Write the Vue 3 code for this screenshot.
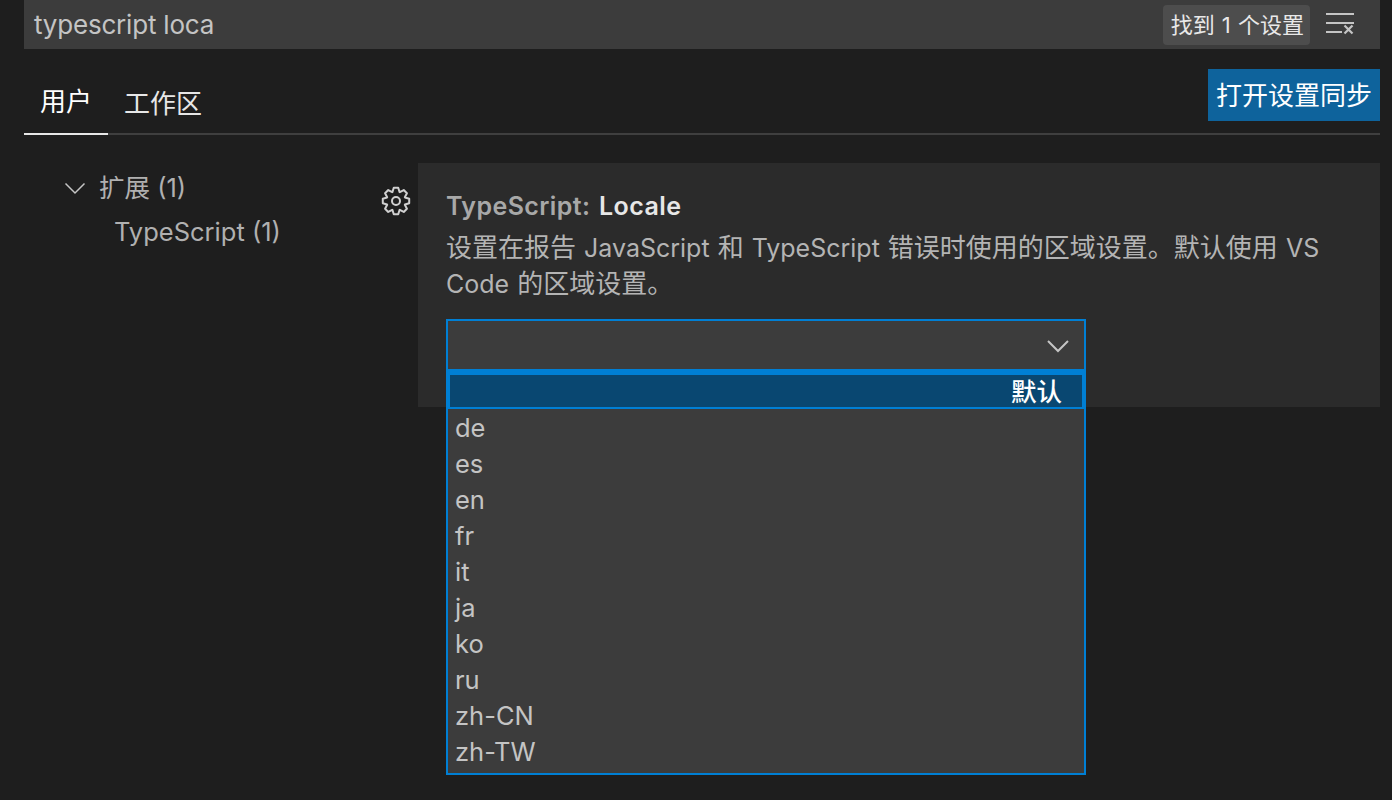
<template>
  <div class="page">
    <div class="search">
      <span class="query">typescript loca</span>
      <span class="count">找到 1 个设置</span>
      <svg class="clear" width="30" height="24" viewBox="0 0 30 24" fill="none" stroke="#c5c5c5" stroke-width="2">
        <path d="M2 2h28M2 11h28M2 20h16" />
        <path d="M20.500 13.500l8 8M28.500 13.500l-8 8" stroke-width="2.200" />
      </svg>
    </div>

    <div class="tabs">
      <div class="tab active">用户</div>
      <div class="tab">工作区</div>
      <button class="sync">打开设置同步</button>
    </div>

    <div class="body">
      <div class="toc">
        <div class="toc-row group">
          <svg width="22" height="14" viewBox="0 0 22 14" fill="none" stroke="#c5c5c5" stroke-width="1.500">
            <path d="M1.500 2.500l9.500 9.500 9.500-9.500" />
          </svg>
          <span class="toc-label">扩展 (1)</span>
        </div>
        <div class="toc-row child">TypeScript (1)</div>
      </div>

      <div class="gear-col">
        <svg width="30" height="30" viewBox="0 0 30 30" fill="none" stroke="#d0d0d0" stroke-width="2" stroke-linejoin="round">
          <path :d="gearPath" />
          <circle cx="15" cy="15" r="4" />
        </svg>
      </div>

      <div class="card">
        <div class="title"><span>TypeScript:</span> <b>Locale</b></div>
        <div class="desc">
          <div v-for="(line, i) in descLines" :key="i" class="desc-line">
            <template v-for="(run, j) in line" :key="j">
              <span :class="{ en: run.en }">{{ run.text }}</span>{{ j < line.length - 1 ? " " : "" }}
            </template>
          </div>
        </div>
        <div class="select">
          <div class="select-box">
            <svg width="24" height="14" viewBox="0 0 24 14" fill="none" stroke="#c5c5c5" stroke-width="2">
              <path d="M2 2l10 10 10-10" />
            </svg>
          </div>
          <div class="menu">
            <div class="option current">默认</div>
            <div class="list">
              <div v-for="item in locales" :key="item" class="option">{{ item }}</div>
            </div>
          </div>
        </div>
      </div>
    </div>
  </div>
</template>

<script setup>
const locales = ["de", "es", "en", "fr", "it", "ja", "ko", "ru", "zh-CN", "zh-TW"];

// latin runs sit a touch smaller than the CJK around them
const descLines = [
  [
    { text: "设置在报告" },
    { text: "JavaScript", en: true },
    { text: "和" },
    { text: "TypeScript", en: true },
    { text: "错误时使用的区域设置。默认使用" },
    { text: "VS", en: true },
  ],
  [{ text: "Code", en: true }, { text: "的区域设置。" }],
];

// 8 tooth gear outline, centred in a 30 box
const buildGear = () => {
  const points = [];
  for (let i = 0; i < 8; i++) {
    const a = (i * Math.PI) / 4 - Math.PI / 2;
    const step = 0.21;
    [
      [9.6, -step * 1.8],
      [13.4, -step * 0.8],
      [13.4, step * 0.8],
      [9.6, step * 1.8],
    ].forEach(([r, d]) => {
      points.push(`${(15 + r * Math.cos(a + d)).toFixed(2)} ${(15 + r * Math.sin(a + d)).toFixed(2)}`);
    });
  }
  return "M" + points.join("L") + "Z";
};

const gearPath = buildGear();
</script>

<style>
html,
body {
  background: #1e1e1e;
}
</style>

<style scoped>
.page {
  box-sizing: border-box;
  width: 1392px;
  height: 800px;
  padding: 0 12px 0 24px;
  background: #1e1e1e;
  color: #ccc;
  font-family: "Inter", "Noto Sans CJK SC", sans-serif;
  overflow: hidden;
}

.search {
  display: flex;
  align-items: center;
  height: 49px;
  padding: 0 26px 0 10px;
  background: #3c3c3c;
}

.query {
  flex: 1;
  font-size: 26px;
  letter-spacing: -0.2px;
  color: #c4c4c4;
}

.count {
  padding: 5px 6px 5px 8px;
  line-height: 30px;
  border-radius: 4px;
  background: #4d4d4d;
  color: #e8e8e8;
  font-size: 22px;
  word-spacing: 1px;
  white-space: nowrap;
}

.clear {
  margin-left: 14px;
  margin-top: -1px;
}

.tabs {
  display: flex;
  height: 84px;
  border-bottom: 2px solid #3f3f3f;
}

.tab {
  height: 84px;
  line-height: 110px;
  padding: 0 16px;
  font-size: 26px;
  color: #e7e7e7;
  box-sizing: border-box;
}

.tab.active {
  height: 86px;
  line-height: 106px;
  border-bottom: 2px solid #e7e7e7;
  color: #fff;
}

.sync {
  height: 52px;
  width: 172px;
  margin: 20px 0 0 auto;
  padding: 0 0 4px;
  border: none;
  background: #0e639c;
  color: #fff;
  font-family: inherit;
  font-size: 26px;
  white-space: nowrap;
}

.body {
  display: flex;
  padding-top: 28px;
}

.toc {
  width: 357px;
  padding: 3px 0 0 39px;
  box-sizing: border-box;
  font-size: 25.500px;
  color: #b0b0b0;
}

.toc-row {
  height: 44px;
  line-height: 44px;
}

.group {
  display: flex;
  align-items: center;
  gap: 13px;
}

.group svg {
  margin-left: 1px;
}

.child {
  padding-left: 51px;
}

.gear-col {
  width: 37px;
  padding-top: 23px;
  box-sizing: border-box;
}

.card {
  flex: 1;
  height: 244px;
  padding: 25px 28px 0 28px;
  box-sizing: border-box;
  background: #2b2b2b;
}

.title {
  line-height: 36px;
  font-size: 25px;
  font-weight: 600;
  letter-spacing: 0.4px;
  word-spacing: 2px;
  color: #a8a8a8;
}

.title b {
  font-weight: 600;
  color: #e7e7e7;
}

.desc {
  margin-top: 6px;
  font-size: 26px;
  color: #b4b4b4;
}

.desc-line {
  line-height: 36px;
  height: 36px;
  word-spacing: 0.7px;
  white-space: nowrap;
}

.en {
  font-size: 25px;
}

.select {
  position: relative;
  width: 640px;
  margin-top: 17px;
}

.select-box {
  display: flex;
  align-items: center;
  justify-content: flex-end;
  box-sizing: border-box;
  height: 52px;
  padding-right: 14px;
  border: 2px solid #007fd4;
  border-bottom: none;
  background: #3c3c3c;
}

.menu {
  position: absolute;
  top: 50px;
  left: 0;
  right: 0;
  box-sizing: border-box;
  border: 2px solid #007fd4;
  border-top: none;
  background: #3c3c3c;
}

.option {
  height: 36px;
  line-height: 36px;
  padding-left: 7px;
  font-size: 25.500px;
  color: #c4c4c4;
}

.option.current {
  box-sizing: border-box;
  height: 40px;
  padding: 0 20px 0 0;
  line-height: 34px;
  font-size: 25.500px;
  font-weight: 500;
  text-align: right;
  border: 2px solid #007fd4;
  border-top-width: 6px;
  background: #094771;
  color: #fff;
}

.list {
  padding: 1px 0 3px;
}
</style>
